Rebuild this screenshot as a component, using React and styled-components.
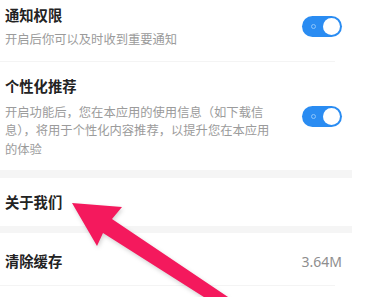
import styled, { createGlobalStyle } from "styled-components";

const GlobalStyle = createGlobalStyle`
  html, body {
    margin: 0;
    padding: 0;
    background: #ffffff;
  }
  body {
    font-family: "Noto Sans CJK SC", "Noto Sans", sans-serif;
    width: 369px;
    height: 297px;
    overflow: hidden;
  }
`;

export const Page = styled.div`
  position: relative;
  width: 352px;
  display: flex;
  flex-direction: column;
`;

export const Row = styled.div`
  display: flex;
  align-items: center;
  justify-content: space-between;
  padding: ${(p) => p.$pad || "14px 10px 12px 5px"};
  border-bottom: ${(p) => (p.$line ? "1px solid #f4f4f4" : "none")};
  margin-right: ${(p) => (p.$line ? "17px" : "0")};
`;

export const TextBlock = styled.div`
  display: flex;
  flex-direction: column;
`;

export const Title = styled.div`
  font-size: 14.3px;
  line-height: 20px;
  font-weight: 700;
  color: #222222;
`;

export const Desc = styled.div`
  margin-top: ${(p) => p.$gap || "5px"};
  font-size: 12.3px;
  line-height: 18.5px;
  color: #9b9b9b;
  white-space: nowrap;
`;

export const Value = styled.div`
  font-family: "Noto Sans", sans-serif;
  font-size: 14px;
  color: #8e8e8e;
  margin-right: -7px;
`;

export const Band = styled.div`
  height: ${(p) => p.$h || 8}px;
  background: #f5f5f5;
`;

export const Switch = styled.div`
  position: relative;
  flex: none;
  width: 40px;
  height: 21px;
  border-radius: 11px;
  background: #2a8cf2;
  margin-right: ${(p) => p.$mr || "0"};
`;

export const Knob = styled.div`
  position: absolute;
  top: 2px;
  right: 2px;
  width: 17px;
  height: 17px;
  border-radius: 50%;
  background: #ffffff;
`;

export const Dot = styled.div`
  position: absolute;
  top: 8px;
  left: 9px;
  width: 3px;
  height: 3px;
  border-radius: 50%;
  border: 1px solid #8cc4fb;
`;

export const Overlay = styled.svg`
  position: absolute;
  left: 0;
  top: 0;
  width: 369px;
  height: 297px;
  pointer-events: none;
  filter: drop-shadow(1px 2px 2px rgba(0, 0, 0, 0.18));
`;

const Toggle = ({ mr }) => (
  <Switch $mr={mr}>
    <Dot />
    <Knob />
  </Switch>
);

const App = () => (
  <>
    <GlobalStyle />
    <Page>
      <Row $line $pad="5px 0 12px 5px">
        <TextBlock>
          <Title>通知权限</Title>
          <Desc>开启后你可以及时收到重要通知</Desc>
        </TextBlock>
        <Toggle mr="-7px" />
      </Row>
      <Row $pad="14px 10px 12px 5px">
        <TextBlock>
          <Title>个性化推荐</Title>
          <Desc $gap="7px">
            开启功能后，您在本应用的使用信息（如下载信
            <br />
            息），将用于个性化内容推荐，以提升您在本应用
            <br />
            的体验
          </Desc>
        </TextBlock>
        <Toggle />
      </Row>
      <Band $h={8} />
      <Row $pad="14px 10px 14px 5px">
        <Title>关于我们</Title>
      </Row>
      <Band $h={7} />
      <Row $line $pad="18px 0 14px 5px">
        <Title>清除缓存</Title>
        <Value>3.64M</Value>
      </Row>
      <Overlay viewBox="0 0 369 297">
        <polygon
          points="72,203 122,207 112,219 231,299 207,299 103,233 97,246"
          fill="#f4195d"
        />
      </Overlay>
    </Page>
  </>
);

export default App;
